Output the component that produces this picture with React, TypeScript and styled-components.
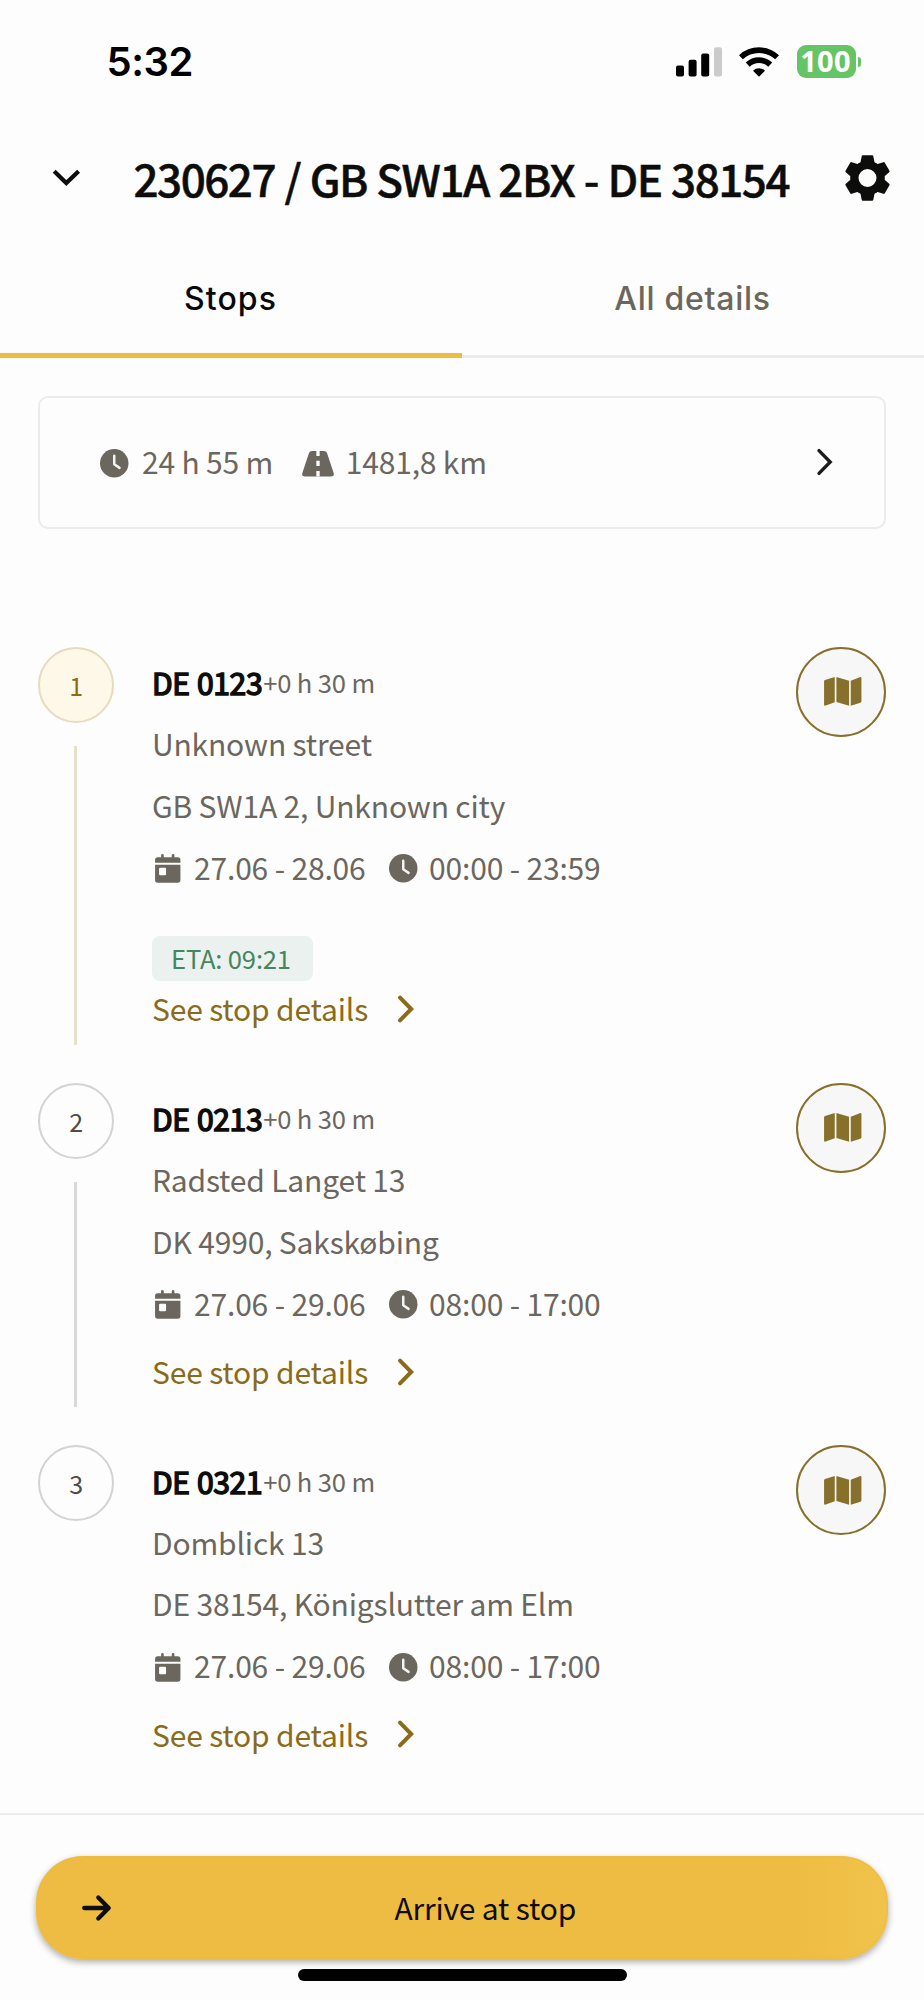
import React from 'react';
import styled, { createGlobalStyle } from 'styled-components';

const sans = '"Noto Sans CJK SC", "Noto Sans", sans-serif';
const system = 'Inter, "Liberation Sans", sans-serif';

const color = {
  page: '#fdfdfd',
  ink: '#0d0e0b',
  muted: '#6b675e',
  line: '#ebebeb',
  amber: '#eebc42',
  gold: '#86702b',
  link: '#8a6b1a',
};

const GlobalStyle = createGlobalStyle`
  * { box-sizing: border-box; }
  body { margin: 0; background: ${color.page}; }
  button { border: 0; padding: 0; margin: 0; background: none; font: inherit; letter-spacing: inherit; color: inherit; }
  svg { display: block; flex: none; overflow: visible; }
`;

const Screen = styled.div`
  display: flex;
  flex-direction: column;
  width: 924px;
  height: 2000px;
  overflow: hidden;
  background: ${color.page};
  color: ${color.muted};
  font-family: ${sans};
  font-size: 30px;
  letter-spacing: -0.17px;
  white-space: nowrap;
`;

/* Status bar */

const StatusBar = styled.div`
  display: flex;
  align-items: center;
  height: 122px;
  padding: 1px 63px 0 106.5px;
`;

const Time = styled.span`
  font: 600 40px/48px ${system};
  letter-spacing: -0.45px;
  color: #000;
  margin-right: auto;
`;

const Indicators = styled.div`
  display: flex;
  align-items: center;
  gap: 17.5px;
`;

const Battery = styled.div`
  display: flex;
  align-items: center;
  gap: 2px;
`;

const BatteryBody = styled.span`
  width: 59px;
  height: 33px;
  border-radius: 9px;
  background: #65c466;
  color: #fff;
  font: 700 29px/32px "Noto Sans", sans-serif;
  letter-spacing: 0.3px;
  text-align: center;
  padding-right: 1px;
`;

const BatteryCap = styled.span`
  width: 3.5px;
  height: 10px;
  border-radius: 0 5px 5px 0;
  background: #65c466;
`;

/* Header */

const Header = styled.header`
  display: flex;
  align-items: center;
  height: 112px;
  padding: 0 34.5px 0 52px;
`;

const Title = styled.h1`
  flex: 1;
  margin: 0 0 0 53.5px;
  font-size: 44px;
  font-weight: 500;
  line-height: 64px;
  letter-spacing: -1.5px;
  word-spacing: 1.1px;
  color: ${color.ink};
  -webkit-text-stroke: 0.5px ${color.ink};
`;

const IconButton = styled.button`
  display: flex;
`;

/* Tabs */

const Tabs = styled.nav`
  display: grid;
  grid-template-columns: 1fr 1fr;
  height: 124px;
`;

const Tab = styled.button<{ $active?: boolean }>`
  position: relative;
  padding: 9px 1px 0 0;
  border-bottom: 3px solid ${color.line};
  font: 500 32px/40px ${system};
  letter-spacing: ${(p) => (p.$active ? '1.1px' : '0.73px')};
  color: ${(p) => (p.$active ? '#080808' : color.muted)};

  &::after {
    content: '';
    display: ${(p) => (p.$active ? 'block' : 'none')};
    position: absolute;
    left: 0;
    right: 0;
    bottom: -3px;
    height: 5px;
    background: ${color.amber};
  }
`;

/* Route summary */

const Summary = styled.button`
  display: flex;
  align-items: center;
  height: 133px;
  margin: 37.7px 38px 0;
  padding: 0 52px 0 60px;
  border: 2px solid ${color.line};
  border-radius: 10px;
`;

const Metric = styled.span<{ $gap: number }>`
  display: flex;
  align-items: center;
  gap: ${(p) => p.$gap}px;
  margin: -2px 29px 0 0;
  line-height: 44px;

  svg { margin-top: 5px; }
`;

const Push = styled.span`
  margin-left: auto;
`;

/* Stops */

const StopList = styled.ol`
  list-style: none;
  margin: 118px 38px 0;
  padding: 0;
  flex: 1;
`;

const Stop = styled.li`
  display: grid;
  grid-template-columns: 76px 1fr 90px;
  column-gap: 38px;
`;

const Rail = styled.div`
  display: flex;
  flex-direction: column;
  align-items: center;
  padding-bottom: 38px;
`;

const Marker = styled.span<{ $current?: boolean }>`
  width: 76px;
  height: 76px;
  border-radius: 50%;
  border: 2px solid ${(p) => (p.$current ? '#e6dcbd' : '#d3d3d3')};
  background: ${(p) => (p.$current ? '#fef8e9' : 'transparent')};
  color: ${(p) => (p.$current ? color.link : '#4c4c4a')};
  font-size: 25px;
  line-height: 72px;
  text-align: center;
`;

const Connector = styled.span<{ $current?: boolean }>`
  flex: 1;
  width: 3px;
  margin: 23.5px 1px 0 0;
  background: ${(p) => (p.$current ? '#e8e1ca' : '#d8d8d8')};
`;

const StopBody = styled.div`
  padding: 4px 0 50.3px;
`;

const Line = styled.div`
  display: flex;
  align-items: center;
  height: 61.6px;
  line-height: 44px;
`;

const HeadLine = styled(Line)`
  padding-top: 1px;
`;

const ScheduleLine = styled(Line)`
  padding: 1px 0 0 2.5px;

  svg { margin-top: 3px; }
`;

const StopName = styled.strong`
  font-size: 30px;
  font-weight: 400;
  letter-spacing: -0.35px;
  word-spacing: 1px;
  color: ${color.ink};
  -webkit-text-stroke: 1.5px ${color.ink};
`;

const Duration = styled.span`
  margin-left: 1px;
  font-size: 25.6px;
`;

const DateRange = styled.span`
  margin: 0 23.5px 0 14px;
`;

const TimeRange = styled.span`
  margin-left: 11.5px;
`;

const Eta = styled.div`
  width: 161px;
  height: 45px;
  margin: 39px 0 -10.7px;
  padding-left: 19px;
  border-radius: 8px;
  background: #ebf1ef;
  color: #45855f;
  font-size: 25.6px;
  line-height: 44px;
`;

const DetailsLink = styled.button`
  display: flex;
  align-items: center;
  gap: 30px;
  height: 48px;
  margin-top: 14px;
  color: ${color.link};
  line-height: 44px;

  svg { margin-top: 1px; }
`;

const MapButton = styled.button`
  display: flex;
  align-items: center;
  justify-content: center;
  width: 90px;
  height: 90px;
  padding: 0 0 1px 4px;
  border: 2px solid ${color.gold};
  border-radius: 50%;
  background: #f7f7f7;
`;

/* Footer */

const Footer = styled.footer`
  display: flex;
  flex-direction: column;
  align-items: center;
  height: 187px;
  padding-top: 41px;
  border-top: 2px solid ${color.line};
`;

const ArriveButton = styled.button`
  display: grid;
  grid-template-columns: 80px 1fr 80px;
  align-items: center;
  width: 852.5px;
  height: 103px;
  padding: 0 0 0 46.5px;
  border-radius: 47px;
  background: linear-gradient(90deg, ${color.amber} 89%, #f0c34b 99%);
  box-shadow: 0 3px 7px rgba(0, 0, 0, 0.33), inset 0 0 3px 1px ${color.amber};
  color: ${color.ink};
`;

const ArriveLabel = styled.span`
  padding-bottom: 2px;
  line-height: 44px;
`;

const HomeIndicator = styled.div`
  width: 329px;
  height: 12px;
  margin-top: 10px;
  border-radius: 6px;
  background: #000;
`;

/* Icons */

const SignalIcon = () => (
  <svg width="46" height="30" viewBox="0 0 46 30">
    <rect x="0" y="18.5" width="8" height="11" rx="2" />
    <rect x="12.6" y="12.8" width="8" height="16.7" rx="2" />
    <rect x="25.2" y="6.5" width="8" height="23" rx="2" />
    <rect x="38" y="0.2" width="8" height="29.3" rx="2" fill="#cbcbcb" />
  </svg>
);

const WifiIcon = () => (
  <svg width="40" height="30" viewBox="-60 -89 120 90" fill="none" stroke="#000" strokeWidth="17">
    <path d="M-54.2-58.2A79.5 79.5 0 0 1 54.2-58.2" />
    <path d="M-33.8-36.2A49.5 49.5 0 0 1 33.8-36.2" />
    <path d="M0 0L-18-18A26 26 0 0 1 18-18Z" fill="#000" stroke="none" />
  </svg>
);

const ChevronDown = () => (
  <svg width="28" height="18" viewBox="0 0 28 18" fill="none" stroke={color.ink} strokeWidth="4.2">
    <path d="M2.2 2.2L14.3 14L26.6 2.2" />
  </svg>
);

const ChevronRight = ({ stroke, width = 3.4 }: { stroke: string; width?: number }) => (
  <svg width="15" height="26" viewBox="0 0 15 26" fill="none" stroke={stroke} strokeWidth={width} strokeLinecap="round">
    <path d="M2 1.6L13.2 13L2 24.4" />
  </svg>
);

const GearIcon = () => (
  <svg width="45" height="46" viewBox="-67.5 -69 135 138" fill={color.ink}>
    {[0, 60, 120, 180, 240, 300].map((angle) => (
      <path
        key={angle}
        transform={`rotate(${angle})`}
        d="M-14-68H14Q17-68 17.4-65L21-47L30-41.5L15-26.5A30 30 0 0 0-15-26.5L-30-41.5L-21-47L-17.4-65Q-17-68-14-68Z"
      />
    ))}
    <circle r="37" fill="none" stroke={color.ink} strokeWidth="20" />
  </svg>
);

const ClockIcon = () => (
  <svg width="28.5" height="28.5" viewBox="-43 -43 86 86">
    <circle r="43" fill={color.muted} />
    <path d="M0-23V3L16 14" fill="none" stroke="#f4f4f2" strokeWidth="7.5" strokeLinecap="round" strokeLinejoin="round" />
  </svg>
);

const RoadIcon = () => (
  <svg width="32" height="25.5" viewBox="0 0 96 76">
    <path
      d="M30 0H66Q73 0 75 6L95 66Q98 76 88 76H8Q-2 76 1 66L21 6Q23 0 30 0Z"
      fill={color.muted}
    />
    <path d="M48 0V15M48 29V45M48 60V76" stroke={color.page} strokeWidth="10" />
  </svg>
);

const CalendarIcon = () => (
  <svg width="25.5" height="28.7" viewBox="0 0 76 86" fill={color.muted}>
    <path d="M18 10V4Q18 0 22 0T26 4V10H50V4Q50 0 54 0T58 4V10H68Q76 10 76 18V26H0V18Q0 10 8 10Z" />
    <path fillRule="evenodd" d="M0 32H76V78Q76 86 68 86H8Q0 86 0 78ZM15 41Q12 41 12 44V61Q12 64 15 64H30Q33 64 33 61V44Q33 41 30 41Z" />
  </svg>
);

const MapIcon = () => (
  <svg width="37.5" height="28.7" viewBox="0 0 112 86" fill={color.gold}>
    <path d="M3 9L32 0V76L3 86Q0 86 0 83V13Q0 10 3 9Z" />
    <path d="M37 0L75 11V86L37 75Z" />
    <path d="M80 11L109 0Q112 0 112 3V73Q112 76 109 77L80 86Z" />
  </svg>
);

const ArrowRight = () => (
  <svg width="29" height="26" viewBox="0 0 29 26" fill="none" stroke={color.ink} strokeWidth="4.3" strokeLinecap="round" strokeLinejoin="round">
    <path d="M2.2 13H26.5M16.3 2.6L26.7 13L16.3 23.4" />
  </svg>
);

interface StopInfo {
  name: string;
  street: string;
  city: string;
  dates: string;
  hours: string;
  eta?: string;
}

const stops: StopInfo[] = [
  { name: 'DE 0123', street: 'Unknown street', city: 'GB SW1A 2, Unknown city', dates: '27.06 - 28.06', hours: '00:00 - 23:59', eta: '09:21' },
  { name: 'DE 0213', street: 'Radsted Langet 13', city: 'DK 4990, Sakskøbing', dates: '27.06 - 29.06', hours: '08:00 - 17:00' },
  { name: 'DE 0321', street: 'Domblick 13', city: 'DE 38154, Königslutter am Elm', dates: '27.06 - 29.06', hours: '08:00 - 17:00' },
];

export default function App() {
  return (
    <Screen>
      <GlobalStyle />
      <StatusBar>
        <Time>5:32</Time>
        <Indicators>
          <SignalIcon />
          <WifiIcon />
          <Battery>
            <BatteryBody>100</BatteryBody>
            <BatteryCap />
          </Battery>
        </Indicators>
      </StatusBar>

      <Header>
        <IconButton aria-label="Collapse"><ChevronDown /></IconButton>
        <Title>230627 / GB SW1A 2BX - DE 38154</Title>
        <IconButton aria-label="Settings"><GearIcon /></IconButton>
      </Header>

      <Tabs>
        <Tab $active>Stops</Tab>
        <Tab>All details</Tab>
      </Tabs>

      <Summary>
        <Metric $gap={13.5}><ClockIcon />24 h 55 m</Metric>
        <Metric $gap={11.5}><RoadIcon />1481,8 km</Metric>
        <Push><ChevronRight stroke="#1c1c1c" /></Push>
      </Summary>

      <StopList>
        {stops.map((stop, i) => (
          <Stop key={stop.name}>
            <Rail>
              <Marker $current={i === 0}>{i + 1}</Marker>
              {i < stops.length - 1 && <Connector $current={i === 0} />}
            </Rail>
            <StopBody>
              <HeadLine>
                <StopName>{stop.name}</StopName>
                <Duration>+0 h 30 m</Duration>
              </HeadLine>
              <Line>{stop.street}</Line>
              <Line>{stop.city}</Line>
              <ScheduleLine>
                <CalendarIcon />
                <DateRange>{stop.dates}</DateRange>
                <ClockIcon />
                <TimeRange>{stop.hours}</TimeRange>
              </ScheduleLine>
              {stop.eta && <Eta>ETA: {stop.eta}</Eta>}
              <DetailsLink>
                See stop details
                <ChevronRight stroke={color.link} width={4} />
              </DetailsLink>
            </StopBody>
            <MapButton aria-label="Open map"><MapIcon /></MapButton>
          </Stop>
        ))}
      </StopList>

      <Footer>
        <ArriveButton>
          <ArrowRight />
          <ArriveLabel>Arrive at stop</ArriveLabel>
        </ArriveButton>
        <HomeIndicator />
      </Footer>
    </Screen>
  );
}
